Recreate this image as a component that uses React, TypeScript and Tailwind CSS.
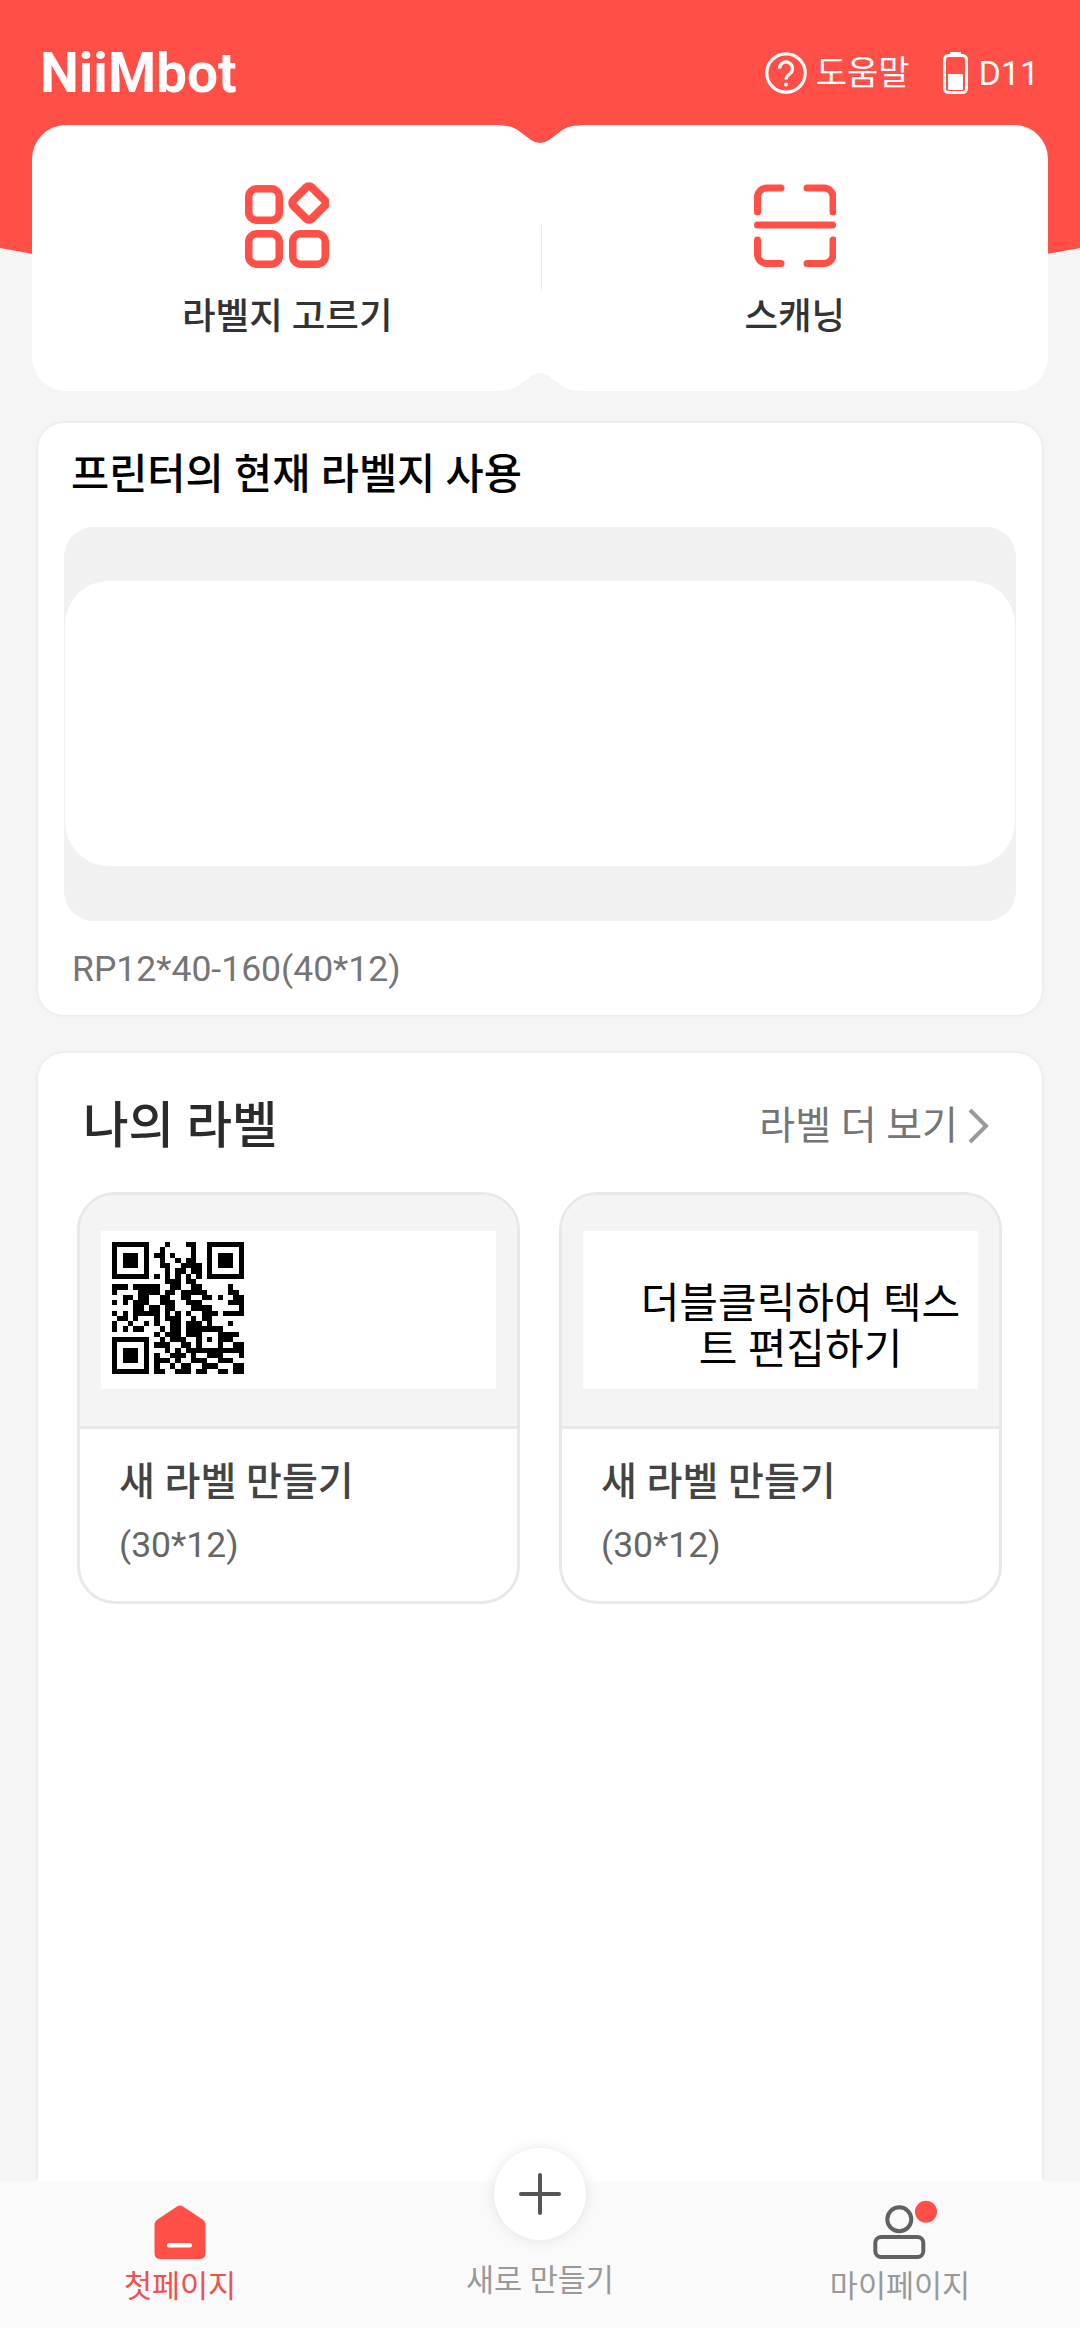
const qrRows = [
    "1111111000100011001111111",
    "1000001001000001001000001",
    "1011101011010001001011101",
    "1011101001001011001011101",
    "1011101001100111101011101",
    "1000001000101101101000001",
    "1111111010101010101111111",
    "0000000000111011000000000",
    "1110111110011001100000100",
    "1000011110110111110000110",
    "0011011001100110011010011",
    "1010111001110011100000111",
    "0000110110110001111000001",
    "1010111110101010011101111",
    "0110100010111001011000000",
    "1001001010011011101000100",
    "1010110001011011111110000",
    "0000000010111011100011110",
    "1111111001011100101011100",
    "1000001011100110100010011",
    "1011101000101011111111111",
    "1011101010011101001110001",
    "1011101011101001110011100",
    "1000001010010110011100011",
    "1111111011001110110011011",
];

function QrCode() {
    return (
        <svg viewBox="0 0 25 25" className="w-[132px] h-[132px]" shapeRendering="crispEdges">
            {qrRows.map((row, y) =>
                row.split("").map((cell, x) =>
                    cell === "1" ? <rect key={`${x}-${y}`} x={x} y={y} width="1" height="1" fill="#000" /> : null
                )
            )}
        </svg>
    );
}

function LabelCard({ children, innerClass }: { children: React.ReactNode; innerClass: string }) {
    return (
        <div className="h-[412px] rounded-[38px] border-[3px] border-[#e8e8e8] overflow-hidden flex flex-col">
            <div className="h-[234px] shrink-0 bg-[#f4f4f4] pt-9 px-[21px] border-b-[3px] border-[#e8e8e8]">
                <div className={`h-[158px] bg-white ${innerClass}`}>{children}</div>
            </div>
            <div className="pl-[39px] pt-[26px]">
                <div className="text-[39px] leading-[54px] font-medium text-[#444]">새 라벨 만들기</div>
                <div className="text-[35.5px] leading-[44px] mt-[14px] text-[#666]">(30*12)</div>
            </div>
        </div>
    );
}

export default function App() {
    return (
        <div className="relative w-[1080px] h-[2328px] overflow-hidden flex flex-col bg-[#f5f5f5] font-[Roboto,'Noto_Sans_CJK_KR',sans-serif]">
            {/* red curved background */}
            <svg viewBox="0 0 1080 300" className="absolute top-0 left-0 w-[1080px] h-[300px]">
                <path d="M0 0H1080V248Q540 348 0 248Z" fill="#ff4f47" />
            </svg>

            <div className="relative flex-1 min-h-0 flex flex-col">
                <header className="h-[125px] pt-5 pl-10 pr-[41px] flex items-center justify-between text-white shrink-0">
                    <span className="text-[55px] leading-[60px] font-bold">NiiMbot</span>
                    <div className="flex items-center text-[34px] leading-[44px]">
                        <svg viewBox="0 0 42 42" className="w-[42px] h-[42px]" fill="none" stroke="#fff">
                            <circle cx="21" cy="21" r="19.2" strokeWidth="3.2" />
                            <path d="M14.5 16.5a6.5 6.5 0 1 1 10 5.5c-2.5 1.6-3.5 2.8-3.5 5.5" strokeWidth="3.2" />
                            <circle cx="21" cy="32.5" r="2" fill="#fff" stroke="none" />
                        </svg>
                        <span className="ml-[9px]">도움말</span>
                        <svg viewBox="0 0 25 42" className="w-[25px] h-[42px] ml-[34px]" fill="none">
                            <rect x="1.5" y="3.5" width="22" height="37" rx="4" stroke="#fff" strokeWidth="3" />
                            <rect x="7" y="0" width="11" height="4" rx="1" fill="#fff" />
                            <rect x="5" y="22" width="15" height="16" rx="1" fill="#fff" />
                        </svg>
                        <span className="ml-[10px]">D11</span>
                    </div>
                </header>

                {/* two action buttons */}
                <div className="relative mx-8 h-[266px] shrink-0 rounded-[34px] bg-white flex text-[36.5px] leading-[44px] font-medium text-[#333]">
                    <svg viewBox="0 0 100 20" className="absolute top-0 left-1/2 -translate-x-1/2 w-[100px] h-[20px]">
                        <path d="M0 0C18 0 24 2 29 6L41 15Q50 21 59 15L71 6C76 2 82 0 100 0Z" fill="#ff4f47" />
                    </svg>
                    <svg viewBox="0 0 100 20" className="absolute bottom-0 left-1/2 -translate-x-1/2 w-[100px] h-[20px] rotate-180">
                        <path d="M0 0C18 0 24 2 29 6L41 15Q50 21 59 15L71 6C76 2 82 0 100 0Z" fill="#f5f5f5" />
                    </svg>
                    <div className="flex-1 flex flex-col items-center pt-[57px] pl-[2px]">
                        <svg viewBox="0 0 84 86" className="w-[84px] h-[86px]" fill="none" stroke="#ff4f47" strokeWidth="7.5">
                            <rect x="3.75" y="6.75" width="30.5" height="31.5" rx="8" />
                            <rect x="3.75" y="51.75" width="30.5" height="30.5" rx="8" />
                            <rect x="47.75" y="51.75" width="32.5" height="30.5" rx="8" />
                            <rect x="51" y="8" width="26" height="26" rx="4" transform="rotate(45 64 21)" strokeWidth="8" />
                        </svg>
                        <span className="mt-[27px]">라벨지 고르기</span>
                    </div>
                    <div className="w-px h-[66px] mt-[100px] bg-[#ececec]" />
                    <div className="flex-1 flex flex-col items-center pt-[59px]">
                        <svg viewBox="14 12 82 84" className="w-[82px] h-[84px]" fill="none" stroke="#ff4f47" strokeWidth="7" strokeLinecap="round">
                            <path d="M17.5 40V25a9 9 0 0 1 9-9H41" />
                            <path d="M67 16h17a9 9 0 0 1 9 9v15" />
                            <path d="M17.5 53H92.5" />
                            <path d="M17.5 68v14a9 9 0 0 0 9 9.5H41" />
                            <path d="M67 91.5h17a9 9 0 0 0 9-9.5V68" />
                        </svg>
                        <span className="mt-[27px]">스캐닝</span>
                    </div>
                </div>

                {/* current paper */}
                <section className="mx-[38px] mt-8 h-[592px] shrink-0 rounded-[26px] bg-white shadow-[0_0_5px_rgba(0,0,0,0.08)] px-[26px]">
                    <h2 className="pl-[7px] pt-[27px] text-[41.5px] leading-[50px] font-medium text-black">프린터의 현재 라벨지 사용</h2>
                    <div className="mt-[27px] h-[394px] rounded-[30px] bg-[#f1f1f1] px-px py-[54px]">
                        <div className="h-[285px] rounded-[44px] bg-white" />
                    </div>
                    <p className="pl-2 mt-[26px] text-[35.5px] leading-[44px] text-[#757575]">RP12*40-160(40*12)</p>
                </section>

                {/* my labels */}
                <section className="mx-[38px] mt-[38px] flex-1 min-h-0 rounded-t-[26px] bg-white shadow-[0_0_5px_rgba(0,0,0,0.08)] pl-[39px] pr-10">
                    <div className="h-[139px] pt-[6px] flex items-center justify-between pl-[6px] pr-[13px]">
                        <h2 className="text-[49.5px] leading-[60px] font-medium text-[#2b2b2b]">나의 라벨</h2>
                        <div className="flex items-center text-[39px] leading-[50px] text-[#757575]">
                            <span>라벨 더 보기</span>
                            <svg viewBox="0 0 22 36" className="w-[22px] h-[36px] ml-[9px]" fill="none" stroke="#9a9a9a" strokeWidth="4">
                                <path d="M3 2l16 16L3 34" />
                            </svg>
                        </div>
                    </div>
                    <div className="grid grid-cols-2 gap-[39px]">
                        <LabelCard innerClass="p-[11px]">
                            <QrCode />
                        </LabelCard>
                        <LabelCard innerClass="flex items-center justify-center pl-10 pt-[34px]">
                            <p className="text-[42px] leading-[46px] text-black text-center">
                                더블클릭하여 텍스
                                <br />
                                트 편집하기
                            </p>
                        </LabelCard>
                    </div>
                </section>
            </div>

            {/* bottom tabs */}
            <nav className="relative z-10 h-[147px] shrink-0 bg-[#fafafa] grid grid-cols-3 text-[30.5px] leading-[40px] text-[#999]">
                <div className="flex flex-col items-center pt-[9px]">
                    <svg viewBox="0 0 100 80" className="w-[100px] h-[80px]">
                        <path d="M47 16.5Q50 14.5 53 16.5L72.5 29.5Q75.5 31.5 75.5 35V63Q75.5 69 69.5 69H30.5Q24.5 69 24.5 63V35Q24.5 31.5 27.5 29.5Z" fill="#ff4f47" />
                        <rect x="37" y="53" width="25" height="4.5" rx="2" fill="#fff" />
                    </svg>
                    <span className="-mt-[3px] text-[#f0514c]">첫페이지</span>
                </div>
                <div className="flex flex-col items-center -mt-[33px]">
                    <div className="w-[92px] h-[92px] rounded-full bg-white shadow-[0_0_14px_rgba(0,0,0,0.1)] flex items-center justify-center">
                        <svg viewBox="0 0 42 42" className="w-[42px] h-[42px]" stroke="#555" strokeWidth="4" strokeLinecap="round">
                            <path d="M21 2V40M2 21H40" />
                        </svg>
                    </div>
                    <span className="mt-[21px]">새로 만들기</span>
                </div>
                <div className="flex flex-col items-center pt-[9px]">
                    <svg viewBox="0 0 100 80" className="w-[100px] h-[80px]" fill="none" stroke="#616161" strokeWidth="4">
                        <circle cx="49.3" cy="29.3" r="12" />
                        <rect x="25.3" y="47" width="48" height="20" rx="6" />
                        <circle cx="76" cy="21.7" r="11" fill="#ff4f47" stroke="none" />
                    </svg>
                    <span className="-mt-[3px]">마이페이지</span>
                </div>
            </nav>
        </div>
    );
}
